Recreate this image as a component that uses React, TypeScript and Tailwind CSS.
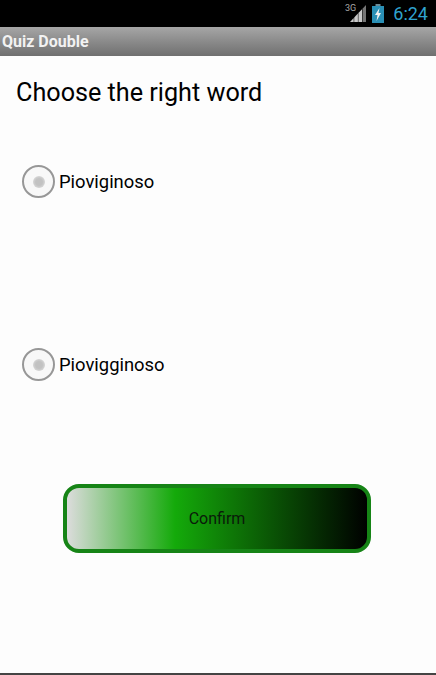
function StatusBar() {
  return (
    <div className="flex h-[27px] items-center justify-end bg-black pr-[8px]">
      {/* signal */}
      <svg width="24" height="27" viewBox="0 0 24 27" className="mr-[4px]">
        <text x="1" y="11" fontSize="9" fill="#a8a8a8" fontFamily="Roboto, sans-serif">3G</text>
        <polygon points="18.5,22 22,22 22,5 18.5,8.7" fill="#767676" />
        <polygon points="14.4,22 18,22 18,9.2 14.4,13" fill="#c9c9c9" />
        <polygon points="10.2,22 13.9,22 13.9,13.6 10.2,17.6" fill="#c9c9c9" />
        <polygon points="6,22 9.7,22 9.7,18 6,22" fill="#c9c9c9" />
      </svg>
      {/* battery */}
      <svg width="12" height="19" viewBox="0 0 12 19" className="mr-[9px]">
        <rect x="3.5" y="0" width="5" height="2" fill="#6a8a96" />
        <rect x="0" y="2" width="12" height="17" fill="#2a8fb5" />
        <polygon points="7.5,4 3,11 5.5,11 4.5,17 9,9 6.5,9" fill="#f2f2f2" />
      </svg>
      <span className="font-['Roboto',sans-serif] text-[18px] leading-none text-[#2fa3cf]">6:24</span>
    </div>
  );
}

function RadioRow({ label }: { label: string }) {
  return (
    <div className="flex items-center">
      <span className="flex h-[33px] w-[33px] items-center justify-center rounded-full border-[2px] border-[#979797] bg-[#f8f8f8]">
        <span className="h-[12px] w-[12px] rounded-full bg-[radial-gradient(circle,#c2c2c2_40%,#e8e8e8_100%)]" />
      </span>
      <span className="ml-[4px] pt-[2px] text-[18.4px] leading-none text-black">{label}</span>
    </div>
  );
}

export default function App() {
  return (
    <div className="flex h-[675px] w-[436px] flex-col overflow-hidden bg-[#fdfdfd] font-['Roboto',sans-serif]">
      <StatusBar />
      <div className="flex h-[29px] items-center bg-gradient-to-b from-[#a6a6a6] to-[#707070] pl-[2px]">
        <span className="text-[16px] font-bold leading-none text-[#f2f2f2]">Quiz Double</span>
      </div>

      <div className="flex flex-1 flex-col">
        <h1 className="ml-[16px] mt-[22px] text-[25.2px] font-normal leading-[30px] text-black">
          Choose the right word
        </h1>

        <div className="ml-[22px] mt-[57px]">
          <RadioRow label="Pioviginoso" />
        </div>
        <div className="ml-[22px] mt-[150px]">
          <RadioRow label="Piovigginoso" />
        </div>

        <button className="ml-[63px] mt-[103px] flex h-[69px] w-[308px] items-center justify-center rounded-[16px] border-[4px] border-[#168416] bg-[linear-gradient(to_right,#dcdcdc_0%,#14aa0a_36%,#000000_100%)] text-[16px] leading-none text-[#0a1a0a]">
          Confirm
        </button>
      </div>

      <div className="h-[2px] bg-[#444444]" />
    </div>
  );
}
